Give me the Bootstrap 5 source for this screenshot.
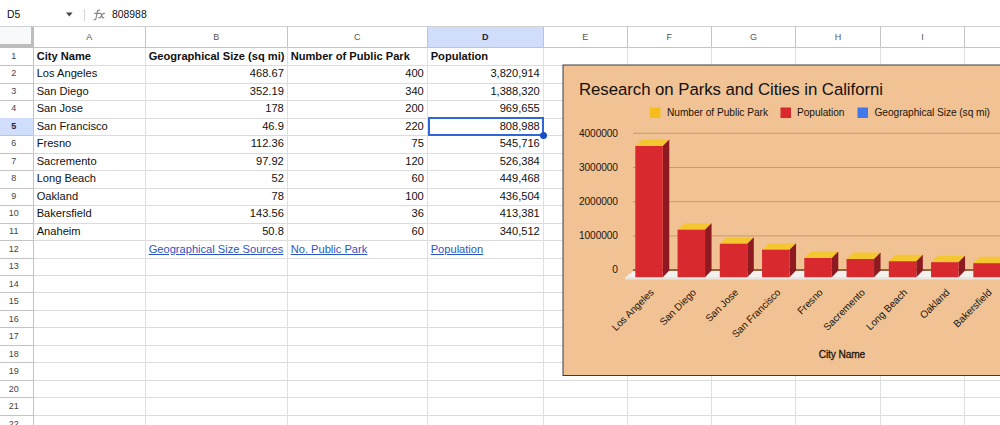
<!DOCTYPE html>
<html lang="en">
<head>
    <meta charset="UTF-8">
    <meta name="viewport" content="width=device-width, initial-scale=1.0">
    <title>Research on Parks and Cities</title>
    <link href="https://cdn.jsdelivr.net/npm/bootstrap@5.3.0/dist/css/bootstrap.min.css" rel="stylesheet">
    <style>
        body {
            height: 100vh;
            font-family: "Liberation Sans", Arial, sans-serif;
            color: #111;
            background: #fff;
        }

        /* Formula bar */
        .formula-bar {
            height: 27px;
            flex: none;
            padding: 3px 0 0 7px;
            font-size: 10.4px;
            border-bottom: 1px solid #cfd0d1;
        }

        .name-box {
            width: 67px;
            padding-right: 1px;
        }

        .bar-rule {
            width: 1px;
            height: 12px;
            margin: 0 8px 0 10px;
            background: #d5d5d5;
        }

        .formula-text {
            padding-left: 5px;
        }

        /* Sheet grid, every line is one row of cells */
        .sheet-line {
            display: grid;
            grid-template-columns: 33.5px 112px 142px 140px 116px 84px 84.2px 84.3px 84.6px 84.3px 84px;
            height: 17.55px;
            line-height: 17.5px;
            font-size: 11.12px;
        }

        .sheet-line > div {
            border-right: 1px solid #e0e0e0;
            border-bottom: 1px solid #dcdcdc;
            padding: 0 2.7px 0 3.2px;
            white-space: nowrap;
        }

        .sheet-line > .row-num {
            padding: 0 5px 0 0;
            border-color: #c4c4c4;
            font-size: 9px;
            line-height: 16.5px;
            text-align: center;
            color: #444;
        }

        .sheet-line.head-line {
            height: 20.5px;
            line-height: 20px;
            font-size: 9px;
            color: #555;
            text-align: center;
        }

        .head-line > div {
            border-color: #c4c4c4;
        }

        .head-line > .corner {
            background: #f8f9fa;
            border-right: 3.5px solid #bdbdbd;
            border-bottom: 4px solid #bdbdbd;
        }

        .sheet-line > .picked {
            background: #d0ddfb;
            color: #1b2540;
            font-weight: bold;
        }

        .sheet-line a {
            color: #2a56c6;
        }

        .sheet-line > .active-cell {
            position: relative;
            border-color: transparent;
        }

        .active-cell::before {
            content: "";
            position: absolute;
            inset: -1px -1px -1px 0;
            border: 2px solid #2f66d8;
        }

        .active-cell::after {
            content: "";
            position: absolute;
            right: -4px;
            bottom: -4px;
            width: 7px;
            height: 7px;
            border-radius: 50%;
            background: #1a4fc4;
            z-index: 1;
        }

        /* Chart floats over the sheet */
        .chart-box {
            left: 562px;
            top: 64px;
        }
    </style>
</head>
<body class="d-flex flex-column overflow-hidden position-relative">
    <div class="formula-bar d-flex align-items-center">
        <div class="name-box d-flex align-items-center justify-content-between">
            <span>D5</span>
            <svg width="7" height="5" viewBox="0 0 7 5"><path d="M0 .5h6.6L3.3 4.5z" fill="#444"/></svg>
        </div>
        <div class="bar-rule"></div>
        <svg width="14" height="14" viewBox="0 0 14 14" fill="none" stroke="#858585" stroke-width="1.2" stroke-linecap="round">
            <path d="M6.600 2.200C5.200 1.600 4.600 2.500 4.300 3.900L3.100 10c-.3 1.500-.9 2.200-2.100 1.800M1.800 5.400h4.200M6.500 5.400c1.200-.4 1.600.3 2 1.600l.5 1.700c.3 1.200.9 1.500 1.800.9M11.500 5.400c-1-.4-1.700.3-2.500 1.600L8 8.500C7.400 9.600 6.700 10.100 5.800 9.700"/>
        </svg>
        <span class="formula-text">808988</span>
    </div>

    <div id="sheet"></div>

    <div class="chart-box position-absolute">
        <svg id="chart" class="d-block" width="438" height="313" viewBox="562 64 438 313" font-family="Liberation Sans, Arial, sans-serif" fill="#21150d"></svg>
    </div>

    <script src="https://cdn.jsdelivr.net/npm/bootstrap@5.3.0/dist/js/bootstrap.bundle.min.js"></script>

    <script>
        const cities = [
            ['Los Angeles', '468.67', '400', '3,820,914'],
            ['San Diego', '352.19', '340', '1,388,320'],
            ['San Jose', '178', '200', '969,655'],
            ['San Francisco', '46.9', '220', '808,988'],
            ['Fresno', '112.36', '75', '545,716'],
            ['Sacremento', '97.92', '120', '526,384'],
            ['Long Beach', '52', '60', '449,468'],
            ['Oakland', '78', '100', '436,504'],
            ['Bakersfield', '143.56', '36', '413,381'],
            ['Anaheim', '50.8', '60', '340,512']
        ];
        const titles = ['City Name', 'Geographical Size (sq mi)', 'Number of Public Park', 'Population'];
        const sources = ['', 'Geographical Size Sources', 'No. Public Park', 'Population'];

        // Sheet
        let html = '<div class="sheet-line head-line"><div class="corner"></div>';
        for (const letter of 'ABCDEFGHIJ') {
            html += `<div class="${letter === 'D' ? 'picked' : ''}">${letter === 'J' ? '' : letter}</div>`;
        }
        html += '</div>';

        for (let r = 1; r <= 22; r++) {
            html += `<div class="sheet-line"><div class="row-num ${r === 5 ? 'picked' : ''}">${r}</div>`;
            for (let c = 0; c < 10; c++) {
                let cls = '';
                let text = '';
                if (r === 1) {
                    cls = 'fw-bold';
                    text = titles[c] || '';
                } else if (r <= 11) {
                    text = cities[r - 2][c] || '';
                    cls = c > 0 ? 'text-end' : '';
                } else if (r === 12 && sources[c]) {
                    text = `<a href="#">${sources[c]}</a>`;
                }
                if (r === 5 && c === 3) cls += ' active-cell';
                html += `<div class="${cls}">${text}</div>`;
            }
            html += '</div>';
        }
        document.getElementById('sheet').innerHTML = html;

        // Chart
        const label = (x, y, size, text, len, extra = '') =>
            `<text x="${x}" y="${y}" font-size="${size}" ${len ? `textLength="${len}"` : ''} ${extra}>${text}</text>`;

        let svg = '<rect x="563" y="65" width="450" height="310.500" fill="#f1c294" stroke="#3f3a3a"/>';
        svg += label(579, 94.5, 16.8, 'Research on Parks and Cities in Californi', 304, 'fill="#111"');

        const legend = [
            [650, '#f4bd1d', 667, 'Number of Public Park', 101],
            [780.5, '#d8292f', 797, 'Population', 47.5],
            [857.5, '#4079ee', 874.5, 'Geographical Size (sq mi)', 115.5]
        ];
        for (const [x, color, tx, text, len] of legend) {
            svg += `<rect x="${x}" y="107.500" width="10.500" height="10.500" fill="${color}"/>`;
            svg += label(tx, 116.2, 10.2, text, len);
        }

        [4, 3, 2, 1, 0].forEach((n, i) => {
            const y = 133.3 + i * 34.2;
            svg += label(618, y + 3.3, 10.2, n ? n + '000000' : '0', n ? 39 : 0, 'text-anchor="end"');
            svg += `<path d="M633 ${y}H1000" stroke="${n ? '#c79a70' : '#8d5a3c'}" stroke-width="${n ? 1 : 1.6}"/>`;
        });

        // floor, then one box per city
        svg += '<path d="M625 277.500L634 270.700H1000V277.500z" fill="#f3f1ee"/><path d="M625 277.300H1000V279.600H625z" fill="#e9e6e4"/>';
        svg += '<path d="M633 270H1000" stroke="#8d5a3c" stroke-width="1.500"/>';
        const tops = [146, 229.7, 243.7, 249.7, 258, 259, 261.3, 262.2, 263.2];
        tops.forEach((y, i) => {
            const x = 635.3 + i * 42.25;
            svg += `<path d="M${x} ${y}l6.500-6.500h27.500l-6.500 6.500z" fill="#f4c630"/>`;
            svg += `<path d="M${x + 27.5} ${y}l6.500-6.500V270.500l-6.500 6.700z" fill="#8c1a20"/>`;
            svg += `<rect x="${x}" y="${y}" width="27.500" height="${277.2 - y}" fill="#d8292f"/>`;
            const lx = x + 19.2;
            svg += label(lx, 293, 10, cities[i][0], 0, `text-anchor="end" transform="rotate(-45 ${lx} 293)"`);
        });
        svg += label(818.7, 357.7, 10.2, 'City Name', 46.5, 'stroke="#21150d" stroke-width=".3"');

        document.getElementById('chart').innerHTML = svg;
    </script>
</body>
</html>
